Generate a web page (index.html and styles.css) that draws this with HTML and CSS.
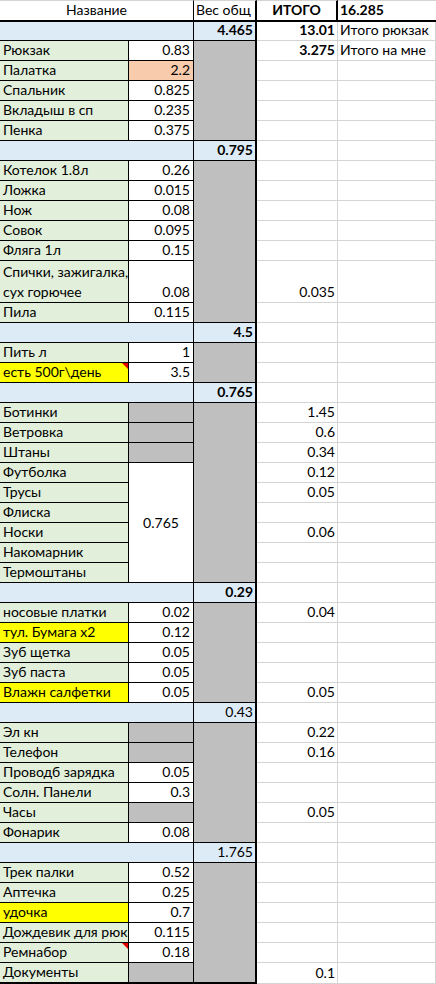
FILE: index.html
```html
<!DOCTYPE html>
<html lang="ru">
<head>
<meta charset="utf-8">
<title>Вес снаряжения</title>
<link rel="stylesheet" href="styles.css">
</head>
<body>
<div class="sheet">
  <!-- row 1 -->
  <div class="c hd-ab">Название</div>
  <div class="c hd-c">Вес общ</div>
  <div class="c hd-d">ИТОГО</div>
  <div class="c hd-e">16.285</div>
  <!-- group 1 -->
  <div class="c grp"></div>
  <div class="c gv bold">4.465</div>
  <div class="c d bold">13.01</div>
  <div class="c e">Итого рюкзак</div>

  <div class="c a">Рюкзак</div><div class="c b">0.83</div><div class="c cg s5"></div><div class="c d bold">3.275</div><div class="c e">Итого на мне</div>
  <div class="c a">Палатка</div><div class="c b orange">2.2</div><div class="c d"></div><div class="c e"></div>
  <div class="c a">Спальник</div><div class="c b">0.825</div><div class="c d"></div><div class="c e"></div>
  <div class="c a">Вкладыш в сп</div><div class="c b">0.235</div><div class="c d"></div><div class="c e"></div>
  <div class="c a">Пенка</div><div class="c b">0.375</div><div class="c d"></div><div class="c e"></div>
  <!-- group 2 -->
  <div class="c grp"></div><div class="c gv bold">0.795</div><div class="c d"></div><div class="c e"></div>
  <div class="c a">Котелок 1.8л</div><div class="c b">0.26</div><div class="c cg s7"></div><div class="c d"></div><div class="c e"></div>
  <div class="c a">Ложка</div><div class="c b">0.015</div><div class="c d"></div><div class="c e"></div>
  <div class="c a">Нож</div><div class="c b">0.08</div><div class="c d"></div><div class="c e"></div>
  <div class="c a">Совок</div><div class="c b">0.095</div><div class="c d"></div><div class="c e"></div>
  <div class="c a">Фляга 1л</div><div class="c b">0.15</div><div class="c d"></div><div class="c e"></div>
  <div class="c a wrap">Спички, зажигалка,<br>сух горючее</div><div class="c b">0.08</div><div class="c d">0.035</div><div class="c e"></div>
  <div class="c a">Пила</div><div class="c b">0.115</div><div class="c d"></div><div class="c e"></div>
  <!-- group 3 -->
  <div class="c grp"></div><div class="c gv bold">4.5</div><div class="c d"></div><div class="c e"></div>
  <div class="c a">Пить л</div><div class="c b">1</div><div class="c cg s2"></div><div class="c d"></div><div class="c e"></div>
  <div class="c a yellow note">есть 500г\день</div><div class="c b">3.5</div><div class="c d"></div><div class="c e"></div>
  <!-- group 4 -->
  <div class="c grp"></div><div class="c gv bold">0.765</div><div class="c d"></div><div class="c e"></div>
  <div class="c a">Ботинки</div><div class="c b gray"></div><div class="c cg s9"></div><div class="c d">1.45</div><div class="c e"></div>
  <div class="c a">Ветровка</div><div class="c b gray"></div><div class="c d">0.6</div><div class="c e"></div>
  <div class="c a">Штаны</div><div class="c b gray"></div><div class="c d">0.34</div><div class="c e"></div>
  <div class="c a">Футболка</div><div class="c b merged s6">0.765</div><div class="c d">0.12</div><div class="c e"></div>
  <div class="c a">Трусы</div><div class="c d">0.05</div><div class="c e"></div>
  <div class="c a">Флиска</div><div class="c d"></div><div class="c e"></div>
  <div class="c a">Носки</div><div class="c d">0.06</div><div class="c e"></div>
  <div class="c a">Накомарник</div><div class="c d"></div><div class="c e"></div>
  <div class="c a">Термоштаны</div><div class="c d"></div><div class="c e"></div>
  <!-- group 5 -->
  <div class="c grp"></div><div class="c gv bold">0.29</div><div class="c d"></div><div class="c e"></div>
  <div class="c a">носовые платки</div><div class="c b">0.02</div><div class="c cg s5"></div><div class="c d">0.04</div><div class="c e"></div>
  <div class="c a yellow">тул. Бумага x2</div><div class="c b">0.12</div><div class="c d"></div><div class="c e"></div>
  <div class="c a">Зуб щетка</div><div class="c b">0.05</div><div class="c d"></div><div class="c e"></div>
  <div class="c a">Зуб паста</div><div class="c b">0.05</div><div class="c d"></div><div class="c e"></div>
  <div class="c a yellow">Влажн салфетки</div><div class="c b">0.05</div><div class="c d">0.05</div><div class="c e"></div>
  <!-- group 6 -->
  <div class="c grp"></div><div class="c gv">0.43</div><div class="c d"></div><div class="c e"></div>
  <div class="c a">Эл кн</div><div class="c b gray"></div><div class="c cg s6"></div><div class="c d">0.22</div><div class="c e"></div>
  <div class="c a">Телефон</div><div class="c b gray"></div><div class="c d">0.16</div><div class="c e"></div>
  <div class="c a">Проводб зарядка</div><div class="c b">0.05</div><div class="c d"></div><div class="c e"></div>
  <div class="c a">Солн. Панели</div><div class="c b">0.3</div><div class="c d"></div><div class="c e"></div>
  <div class="c a">Часы</div><div class="c b gray"></div><div class="c d">0.05</div><div class="c e"></div>
  <div class="c a">Фонарик</div><div class="c b">0.08</div><div class="c d"></div><div class="c e"></div>
  <!-- group 7 -->
  <div class="c grp"></div><div class="c gv">1.765</div><div class="c d"></div><div class="c e"></div>
  <div class="c a">Трек палки</div><div class="c b">0.52</div><div class="c cg s6 last"></div><div class="c d"></div><div class="c e"></div>
  <div class="c a">Аптечка</div><div class="c b">0.25</div><div class="c d"></div><div class="c e"></div>
  <div class="c a yellow">удочка</div><div class="c b">0.7</div><div class="c d"></div><div class="c e"></div>
  <div class="c a">Дождевик для рюкзака</div><div class="c b">0.115</div><div class="c d"></div><div class="c e"></div>
  <div class="c a note">Ремнабор</div><div class="c b">0.18</div><div class="c d"></div><div class="c e"></div>
  <div class="c a last">Документы</div><div class="c b gray last"></div><div class="c d">0.1</div><div class="c e"></div>
</div>
</body>
</html>
```

FILE: styles.css
```css
* { box-sizing: border-box; }
html, body { margin: 0; padding: 0; background: #fff; }
body {
  font-family: "Lato", "Noto Sans", sans-serif;
  font-size: 14px;
  color: #000;
  width: 436px;
  overflow: hidden;
}
.sheet {
  display: grid;
  grid-template-columns: 129px 65px 63px 81px 98px;
  grid-template-rows: 22px 19px repeat(11, 20px) 42px repeat(33, 20px) 21px;
}
.c {
  display: flex;
  align-items: flex-end;
  padding: 0 3px 1px;
  line-height: 18px;
  white-space: nowrap;
  overflow: hidden;
  border-right: 1px solid #000;
  border-bottom: 1px solid #000;
  background: #fff;
  position: relative;
}
.bold { font-weight: 700; }

/* header row */
.hd-ab, .hd-c, .hd-d, .hd-e {
  border-top: 1px solid #d4d4d4;
  border-bottom: 2px solid #000;
}
.hd-ab { grid-column: span 2; justify-content: center; }
.hd-c { border-right: 2px solid #000; padding-left: 2px; }
.hd-d { border-right: 2px solid #000; justify-content: center; font-weight: 700; }
.hd-e { border-right: none; font-weight: 700; padding-left: 2px; }

/* group header */
.grp { grid-column: span 2; background: #ddebf7; }
.gv { background: #ddebf7; justify-content: flex-end; border-right: 2px solid #000; padding-right: 2px; }

/* item cells */
.a { background: #e2efda; padding-right: 0; }
.b { justify-content: flex-end; }
.cg { background: #bfbfbf; border-right: 2px solid #000; }
.gray { background: #bfbfbf; }
.orange { background: #f8cbad; }
.yellow { background: #ffff00; }
.merged { align-items: center; justify-content: center; padding-bottom: 0; }
.wrap { line-height: 20px; padding-bottom: 0; }
.last { border-bottom-width: 2px; }

/* right side, plain grid */
.d, .e {
  border-right: 1px solid #d4d4d4;
  border-bottom: 1px solid #d4d4d4;
}
.d { justify-content: flex-end; padding-right: 2px; }
.e { padding-left: 2px; }

.s2 { grid-row: span 2; }
.s5 { grid-row: span 5; }
.s6 { grid-row: span 6; }
.s7 { grid-row: span 7; }
.s9 { grid-row: span 9; }

/* comment indicator */
.note::after {
  content: "";
  position: absolute;
  top: 0;
  right: 0;
  border-top: 6px solid #e00000;
  border-left: 6px solid transparent;
}
```
